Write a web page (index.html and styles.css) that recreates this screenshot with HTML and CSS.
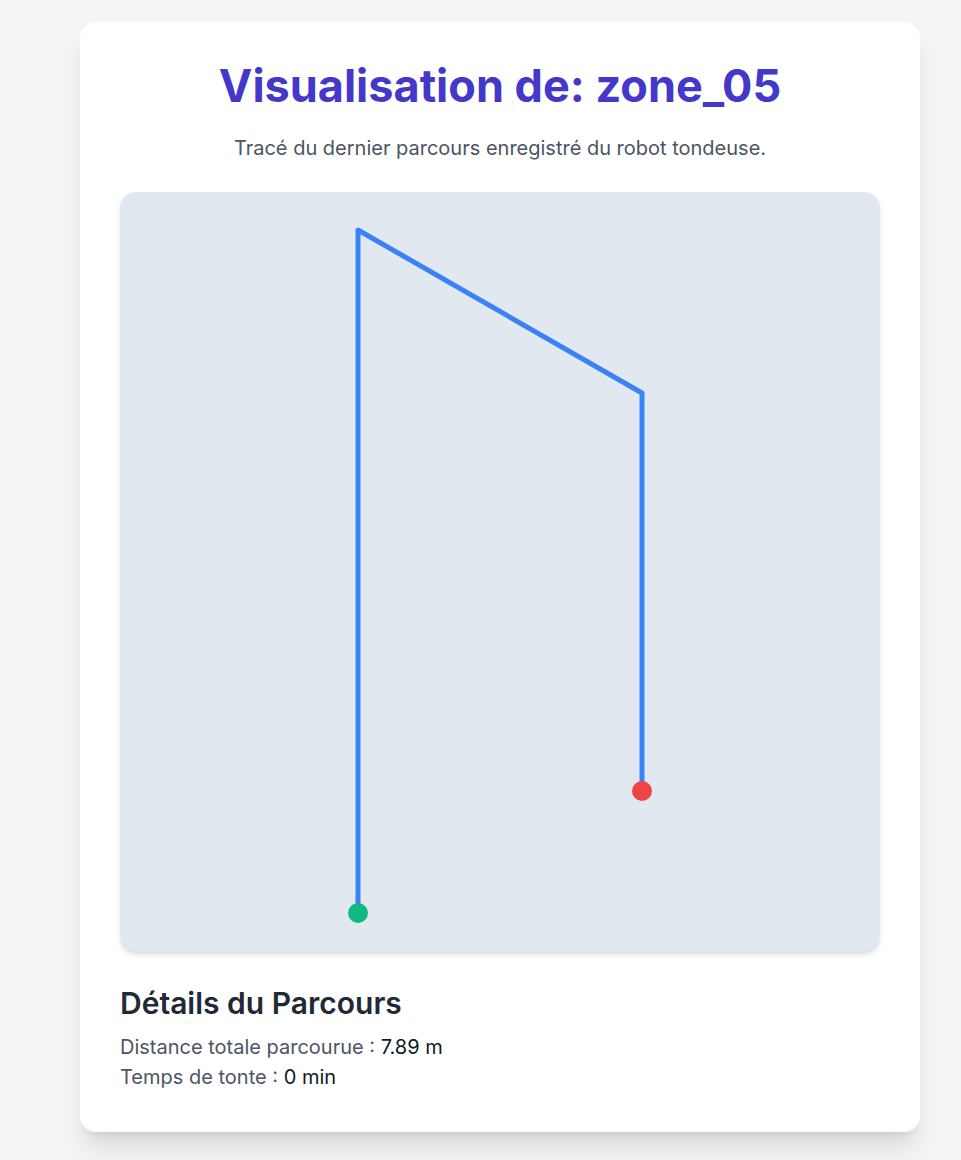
FILE: index.html
```html
<!DOCTYPE html>
<html lang="fr">
<head>
<meta charset="utf-8">
<title>Visualisation de: zone_05</title>
<link rel="stylesheet" href="styles.css">
</head>
<body>
<main class="card">
  <h1 class="title">Visualisation de: zone_05</h1>
  <p class="subtitle">Tracé du dernier parcours enregistré du robot tondeuse.</p>
  <div class="map">
    <svg width="760" height="760" viewBox="0 0 760 760">
      <polyline points="238,721 238,38 522,201 522,599" fill="none" stroke="#3b82f6" stroke-width="5" stroke-linejoin="round" stroke-linecap="round"/>
      <circle cx="238" cy="721" r="10" fill="#10b981"/>
      <circle cx="522" cy="599" r="10" fill="#ef4444"/>
    </svg>
  </div>
  <section class="details">
    <h2 class="details-title">Détails du Parcours</h2>
    <p class="row"><span class="label">Distance totale parcourue :</span> <span class="value">7.89 m</span></p>
    <p class="row"><span class="label">Temps de tonte :</span> <span class="value">0 min</span></p>
  </section>
</main>
</body>
</html>
```

FILE: styles.css
```css
* { box-sizing: border-box; }
html, body { margin: 0; padding: 0; }
body {
  background: #f3f4f6;
  font-family: Inter, "Noto Sans", sans-serif;
  padding: 22px 0 28px 80px;
}
.card {
  width: 840px;
  background: #ffffff;
  border-radius: 16px;
  padding: 40px 40px 40px 40px;
  box-shadow: 0 20px 25px -5px rgba(0,0,0,0.1), 0 8px 10px -6px rgba(0,0,0,0.1);
}
.title {
  margin: 0;
  text-align: center;
  font-size: 45px;
  line-height: 48px;
  font-weight: 700;
  color: #4338ca;
}
.subtitle {
  margin: 24px 0 0;
  text-align: center;
  font-size: 20px;
  line-height: 28px;
  color: #4b5563;
}
.map {
  margin-top: 30px;
  width: 760px;
  height: 760px;
  background: #e2e8f0;
  border-radius: 16px;
  box-shadow: 0 4px 6px -1px rgba(0,0,0,0.1), 0 2px 4px -2px rgba(0,0,0,0.1);
  overflow: hidden;
}
.map svg { display: block; }
.details { margin-top: 33px; }
.details-title {
  margin: 0 0 11px;
  font-size: 30px;
  line-height: 36px;
  font-weight: 600;
  color: #1f2937;
}
.row {
  margin: 0;
  font-size: 20px;
  line-height: 30px;
}
.label { color: #4b5563; }
.value { color: #111827; }
```
